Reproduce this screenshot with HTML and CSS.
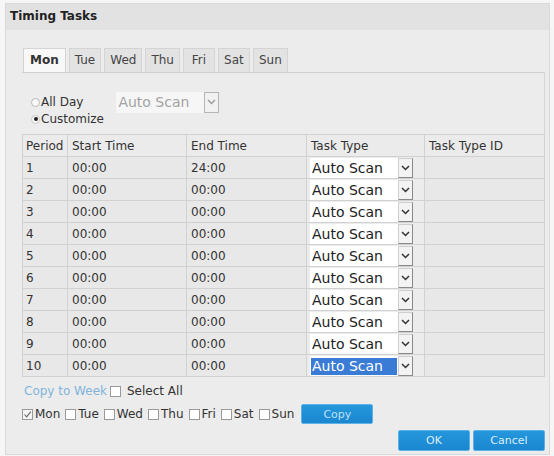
FILE: index.html
```html
<!DOCTYPE html>
<html>
<head>
<meta charset="utf-8">
<link rel="stylesheet" href="styles.css">
</head>
<body>
<div class="dialog">
  <div class="title">Timing Tasks</div>
  <div class="content">
    <div class="tabs">
      <div class="tab active">Mon</div>
      <div class="tab">Tue</div>
      <div class="tab">Wed</div>
      <div class="tab">Thu</div>
      <div class="tab">Fri</div>
      <div class="tab">Sat</div>
      <div class="tab">Sun</div>
    </div>
    <div class="panel">
      <div class="mode">
        <div class="mode-row">
          <span class="radio"></span><span class="mode-label">All Day</span>
          <div class="select disabled">
            <span class="select-box">Auto Scan</span>
            <span class="select-btn"><svg width="9" height="6" viewBox="0 0 9 6"><path d="M1 1 L4.5 4.5 L8 1" fill="none" stroke="#9a9a9a" stroke-width="1.4"/></svg></span>
          </div>
        </div>
        <div class="mode-row second">
          <span class="radio on"></span><span class="mode-label">Customize</span>
        </div>
      </div>
      <table class="grid">
        <colgroup>
          <col class="c1"><col class="c2"><col class="c3"><col class="c4"><col class="c5">
        </colgroup>
        <thead>
          <tr><th>Period</th><th>Start Time</th><th>End Time</th><th>Task Type</th><th>Task Type ID</th></tr>
        </thead>
        <tbody id="rows"></tbody>
      </table>
    </div>
    <div class="copy-row">
      <span class="copy-link">Copy to Week</span><span class="check"></span><span class="copy-all">Select All</span>
    </div>
    <div class="days-row">
      <span class="check checked"><svg width="9" height="9" viewBox="0 0 9 9"><path d="M1.5 4.5 L3.6 6.8 L7.8 1.6" fill="none" stroke="#666" stroke-width="1.1"/></svg></span><span class="day">Mon</span>
      <span class="check"></span><span class="day">Tue</span>
      <span class="check"></span><span class="day">Wed</span>
      <span class="check"></span><span class="day">Thu</span>
      <span class="check"></span><span class="day">Fri</span>
      <span class="check"></span><span class="day">Sat</span>
      <span class="check"></span><span class="day">Sun</span>
      <span class="btn copy-btn">Copy</span>
    </div>
    <div class="actions">
      <span class="btn">OK</span>
      <span class="btn">Cancel</span>
    </div>
  </div>
</div>
<script>
  var tb = document.getElementById('rows');
  var html = '';
  for (var i = 1; i <= 10; i++) {
    var end = i === 1 ? '24:00' : '00:00';
    var sel = i === 10 ? ' selected' : '';
    html += '<tr><td>' + i + '</td><td>00:00</td><td>' + end + '</td>' +
      '<td class="tt"><div class="select' + sel + '"><span class="select-box"><span class="val">Auto Scan</span></span>' +
      '<span class="select-btn"><svg width="9" height="6" viewBox="0 0 9 6"><path d="M1 1 L4.5 4.5 L8 1" fill="none" stroke="#333" stroke-width="1.5"/></svg></span></div></td>' +
      '<td></td></tr>';
  }
  tb.innerHTML = html;
</script>
</body>
</html>
```

FILE: styles.css
```css
html, body {
  margin: 0;
  padding: 0;
  background: #f6f6f6;
}
body {
  font-family: "DejaVu Sans", Verdana, sans-serif;
  font-size: 12px;
  color: #333;
}
.dialog {
  margin: 3px 0 0 5px;
  width: 545px;
  height: 452px;
  box-sizing: border-box;
  border: 1px solid #d9d9d9;
  background: #ececec;
}
.title {
  height: 26px;
  line-height: 25px;
  background: #e2e2e2;
  padding-left: 4px;
  font-weight: bold;
  font-size: 12px;
  color: #222;
}
.content {
  padding: 18px 0 0 16px;
}
.tabs {
  display: flex;
  gap: 3px;
  padding-left: 1px;
  height: 24px;
}
.tab {
  box-sizing: border-box;
  height: 24px;
  min-width: 32px;
  padding: 0 5px;
  text-align: center;
  line-height: 23px;
  border: 1px solid #d4d4d4;
  border-bottom: none;
  background: #e3e3e3;
  color: #444;
}
.tab.active {
  background: #f8f8f8;
  font-weight: bold;
  color: #333;
  padding: 0 6px;
}
.panel {
  width: 523px;
  box-sizing: border-box;
  border-top: 1px solid #cfcfcf;
  border-right: 1px solid #d6d6d6;
}
.mode {
  padding: 18px 0 0 9px;
  height: 43px;
}
.mode-row {
  display: flex;
  align-items: center;
  height: 22px;
}
.mode-row.second {
  height: 12px;
}
.radio {
  display: inline-block;
  width: 9px;
  height: 9px;
  border-radius: 50%;
  border: 1px solid #b8b8b8;
  background: #fafafa;
  box-sizing: border-box;
  position: relative;
}
.radio.on {
  border-color: #c8c8c8;
}
.radio.on::after {
  content: "";
  position: absolute;
  left: 1.5px;
  top: 1.5px;
  width: 4px;
  height: 4px;
  border-radius: 50%;
  background: #222;
}
.mode-label {
  margin-left: 1px;
  color: #333;
}
.select {
  display: inline-flex;
  align-items: stretch;
  height: 20px;
}
.mode-row .select {
  margin-left: 33px;
  height: 21px;
}
.select-box {
  width: 88px;
  background: #fff;
  font-size: 14px;
  line-height: 20px;
  padding-left: 2px;
  box-sizing: border-box;
  color: #222;
  white-space: nowrap;
  overflow: hidden;
}
.select.disabled .select-box {
  background: #f6f6f6;
  color: #a3a3a3;
  line-height: 21px;
}
.select-btn {
  width: 15px;
  box-sizing: border-box;
  background: #f3f3f3;
  border: 1px solid #8a8a8a;
  border-left-color: #cfcfcf;
  border-top-color: #cfcfcf;
  display: flex;
  align-items: center;
  justify-content: center;
}
.select.disabled .select-btn {
  border-color: #b5b5b5;
  background: #f1f1f1;
}
.select.selected .select-box {
  padding: 2px 1px 1px 1px;
}
.select.selected .val {
  background: #3a7bd5;
  color: #fff;
  display: block;
  line-height: 17px;
  padding-left: 1px;
}
.grid {
  width: 523px;
  table-layout: fixed;
  border-collapse: collapse;
  background: #e8e8e8;
}
.c1 { width: 45px; }
.c2 { width: 119px; }
.c3 { width: 120px; }
.c4 { width: 118px; }
.c5 { width: 120px; }
.grid th, .grid td {
  border: 1px solid #d1d1d1;
  height: 21px;
  padding: 0 0 0 4px;
  text-align: left;
  font-weight: normal;
  color: #333;
  white-space: nowrap;
}
.grid th {
  background: #ebebeb;
}
.grid td:first-child, .grid th:first-child {
  padding-left: 3px;
}
.grid td.tt {
  padding: 0 0 0 3px;
  background: #ececec;
}
.copy-row {
  margin-top: 7px;
  height: 14px;
  display: flex;
  align-items: center;
  padding-left: 2px;
}
.copy-link {
  color: #7fb4dd;
}
.check {
  display: inline-flex;
  align-items: center;
  justify-content: center;
  width: 11px;
  height: 11px;
  box-sizing: border-box;
  border: 1px solid #9a9a9a;
  background: #fff;
}
.copy-row .check {
  margin-left: 3px;
}
.copy-all {
  margin-left: 6px;
}
.days-row {
  margin-top: 6px;
  height: 20px;
  display: flex;
  align-items: center;
}
.day {
  margin: 0 5px 0 2px;
}
.check.checked {
  background: #f4f4f4;
}
.btn {
  display: inline-flex;
  align-items: center;
  justify-content: center;
  width: 72px;
  height: 21px;
  box-sizing: border-box;
  background: linear-gradient(#2597dd, #1a86cf);
  border: 1px solid #5cb2e6;
  border-radius: 2px;
  color: #eaf5ff;
  font-size: 11px;
}
.copy-btn {
  height: 20px;
  margin-left: 2px;
  color: #bfe0f7;
}
.actions {
  margin-top: 6px;
  width: 523px;
  display: flex;
  justify-content: flex-end;
  gap: 3px;
}
.actions .btn {
  color: #dbeefc;
}
```
